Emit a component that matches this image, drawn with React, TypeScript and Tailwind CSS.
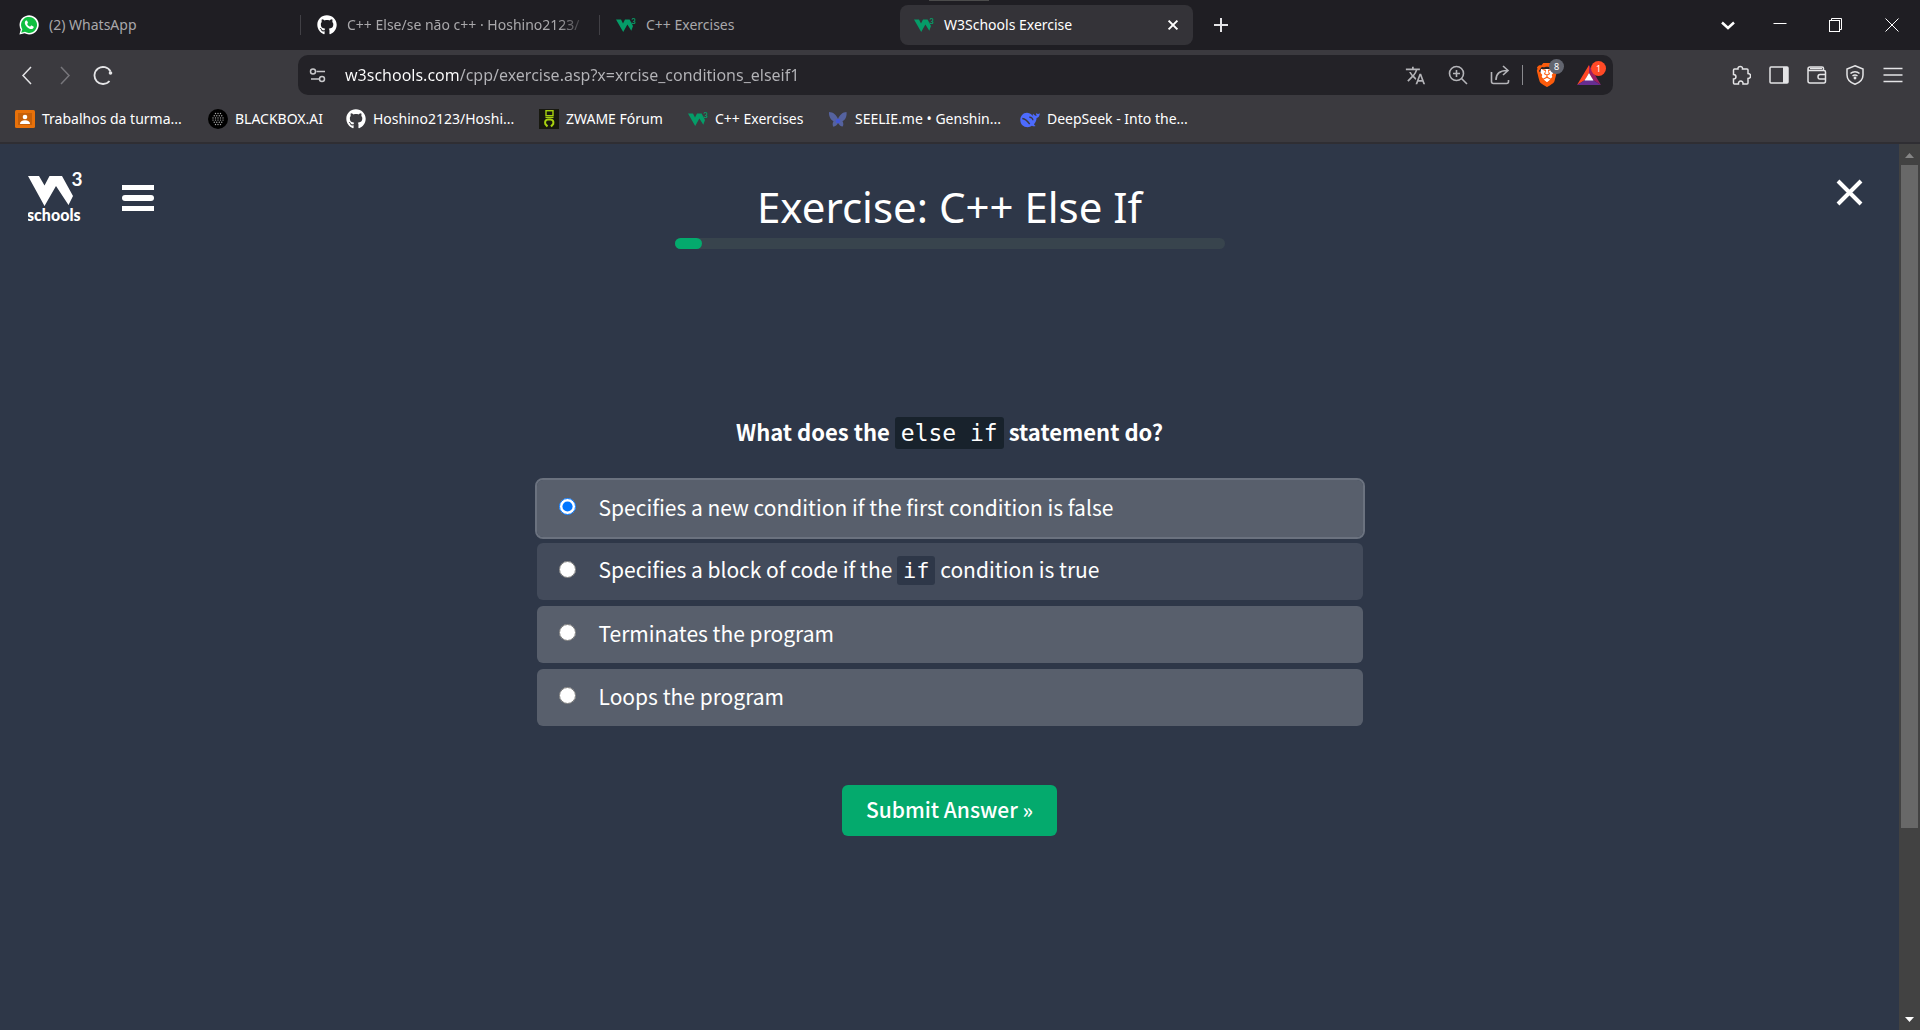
import React, { useState } from "react";
import { FaGithub } from "react-icons/fa";
import { SiBrave } from "react-icons/si";
import { MdTranslate } from "react-icons/md";

const UI = "font-['Noto_Sans',sans-serif]";

function W3Icon() {
  return (
    <svg viewBox="0 0 20 20" className="size-5 shrink-0" aria-hidden="true">
      <path d="M0 4.500h5l2 4 2-4h4.600l3.400 6.600-1.700 4.600-3.900-6.200-4.200 7.500z" fill="#059c68" />
      <text x="15.2" y="9" fontSize="8" fontWeight="700" fill="#059c68" fontFamily="Lato, sans-serif">3</text>
    </svg>
  );
}

function WhatsAppIcon() {
  return (
    <svg viewBox="0 0 20 20" className="size-5 shrink-0" aria-hidden="true">
      <path d="M0.4 19.6 1.8 14.6A9.6 9.6 0 1 1 5.6 18.3Z" fill="#fff" />
      <path d="M2.2 17.8 3.3 14.2A8 8 0 1 1 6 16.8Z" fill="#0fbf3f" />
      <path
        d="M6.9 5.6c.3-.3 1-.3 1.2.1l.8 1.7c.1.3 0 .6-.2.8l-.6.7c.7 1.4 1.6 2.2 3 2.8l.8-.9c.2-.2.5-.3.8-.2l1.6.8c.4.2.5.5.4.9-.2 1.200-1.300 1.900-2.400 1.800-3.100-.3-6.300-3.400-6.500-6.200 0-.9.4-1.700 1.100-2.300z"
        fill="#fff"
      />
    </svg>
  );
}

function ClassroomIcon() {
  return (
    <svg viewBox="0 0 20 20" className="size-5 shrink-0" aria-hidden="true">
      <rect x="0" y="1" width="20" height="18" rx="1.500" fill="#e8710a" />
      <rect x="3" y="4" width="14" height="12" fill="#c65f08" />
      <circle cx="10" cy="8" r="2.300" fill="#fff" />
      <path d="M5 15c0-2.600 2-3.700 5-3.700s5 1.100 5 3.700z" fill="#fff" />
    </svg>
  );
}

function BlackboxIcon() {
  const dots: [number, number][] = [];
  for (let r = 0; r < 6; r++) {
    const n = [3, 4, 5, 5, 4, 3][r];
    for (let c = 0; c < n; c++) dots.push([10 + (c - (n - 1) / 2) * 2.5, 4.5 + r * 2.2]);
  }
  return (
    <svg viewBox="0 0 20 20" className="size-5 shrink-0" aria-hidden="true">
      <circle cx="10" cy="10" r="10" fill="#000" />
      {dots.map(([x, y], i) => (
        <circle key={i} cx={x} cy={y} r="0.7" fill="#a9a9a9" />
      ))}
    </svg>
  );
}

function ZwameIcon() {
  return (
    <svg viewBox="0 0 20 20" className="size-5 shrink-0" aria-hidden="true">
      <rect width="20" height="20" fill="#17180f" />
      <g fill="none" stroke="#a8d20f">
        <rect x="7" y="1.700" width="7" height="5" strokeWidth="1.400" />
        <path d="M6.500 8.500h8" strokeWidth="1.200" />
        <path d="M8.500 17.500 6.300 15c-.8-3 .7-4.600 2.700-4.600h2.500c2 0 3.500 1.600 2.700 4.600L12 17.500" strokeWidth="2" />
      </g>
    </svg>
  );
}

function ButterflyIcon() {
  return (
    <svg viewBox="0 0 20 20" className="size-5 shrink-0" aria-hidden="true">
      <path
        d="M1 3c4 0 7.500 2.800 9 7 1.500-4.200 5-7 8.500-7 .5 4-.8 7.700-4 9.300 1 1.700 1.200 3.700.2 5.200-2-.2-3.700-1.500-4.700-3.500-1 2-2.500 3.400-4.700 3.700-1-1.700-.8-3.700.2-5.400C2.500 10.700.7 7 1 3z"
        fill="#55629f"
      />
      <circle cx="10" cy="12" r="2.300" fill="#4257d6" />
    </svg>
  );
}

function DeepSeekIcon() {
  return (
    <svg viewBox="0 0 20 20" className="size-5 shrink-0" aria-hidden="true">
      <path
        d="M19.800 4.200c-1.200.9-2.500 1-3.400-.2-.4.900-.3 2 .4 3-1.600-.2-2.800-1-3.700-2.200-.7.900-.3 1.900.4 2.700-1.600-1.400-3.500-3.600-6.300-3.700C3.200 3.600.3 7 .3 11c0 4.300 3.300 7.200 7.200 7.200 1.800 0 3.300-.6 4.500-1.400 1.100.6 2.600.7 3.600.2-.7-.5-1.300-1.100-1.600-1.800 1.600-1.700 2.500-3.700 2.600-6.100 2-.5 3.200-2.200 3.200-4.900z"
        fill="#4d6bfe"
      />
      <path
        d="M2.300 9.500c3.200.3 5.400 2.700 7.400 5.700M9.300 8.300c2-.3 3.500 1.200 3.600 3"
        fill="none"
        stroke="#3b3a3f"
        strokeWidth="1.400"
      />
    </svg>
  );
}

function BatIcon() {
  return (
    <svg viewBox="0 0 24 20" className="h-5 w-6" aria-hidden="true">
      <path d="M12 0 0 20l8-5 4-7z" fill="#ff4724" />
      <path d="M12 0 24 20l-8-5-4-7z" fill="#9e1f63" />
      <path d="M0 20h24l-8-5H8z" fill="#662d91" />
      <path d="m12 8 4.500 7.500h-9z" fill="#fff" />
    </svg>
  );
}

function Line({ d, className = "size-5", w = 1.5, children }: { d?: string; className?: string; w?: number; children?: React.ReactNode }) {
  return (
    <svg viewBox="0 0 20 20" className={className} fill="none" stroke="currentColor" strokeWidth={w} aria-hidden="true">
      {d && <path d={d} />}
      {children}
    </svg>
  );
}

function Tab({ icon, title, fade }: { icon: React.ReactNode; title: string; fade?: boolean }) {
  return (
    <button className="flex h-10 min-w-0 flex-1 items-center gap-2.5 pl-4 pr-3 text-left text-[#a9a8ab]">
      {icon}
      <span
        className={
          fade
            ? "min-w-0 flex-1 overflow-hidden whitespace-nowrap [mask-image:linear-gradient(to_right,black_88%,transparent)]"
            : "min-w-0 flex-1 overflow-hidden whitespace-nowrap"
        }
      >
        {title}
      </span>
    </button>
  );
}

function TabStrip() {
  return (
    <div className="relative flex h-[50px] items-center bg-[#1f1e23] text-sm">
      <div className="absolute left-[929px] top-0 h-px w-[60px] bg-[#4b4b4b]" />
      <div className="flex w-[1196px] items-center">
        <div className="flex w-[300px] items-center pl-[3px]">
          <Tab icon={<WhatsAppIcon />} title="(2) WhatsApp" />
        </div>
        <div className="h-5 w-px bg-[#414045]" />
        <div className="flex w-[298px] items-center">
          <Tab icon={<FaGithub className="size-5 shrink-0 text-white" />} title="C++ Else/se não c++ · Hoshino2123/" fade />
        </div>
        <div className="h-5 w-px bg-[#414045]" />
        <div className="flex w-[300px] items-center">
          <Tab icon={<W3Icon />} title="C++ Exercises" />
        </div>
        <div className="flex h-10 w-[293px] items-center gap-2.5 rounded-lg bg-[#343338] pl-3.5 pr-3 text-white">
          <W3Icon />
          <span className="flex-1 whitespace-nowrap">W3Schools Exercise</span>
          <button aria-label="Close tab" className="flex size-4 items-center justify-center">
            <Line className="size-4" w={2.5} d="M4.500 4.500l11 11M15.500 4.500l-11 11" />
          </button>
        </div>
      </div>
      <button aria-label="New tab" className="ml-[15px] flex size-5 items-center justify-center text-[#e4e4e6]">
        <Line d="M10 3v14M3 10h14" w={2} />
      </button>
      <div className="ml-auto flex items-center text-white">
        <button aria-label="Search tabs" className="mr-2 flex size-8 items-center justify-center">
          <Line d="M4 7.500l6 5.500 6-5.500" w={2.5} />
        </button>
        <button aria-label="Minimize" className="flex h-[50px] w-14 items-center justify-center">
          <Line d="M3.500 8.500h13" w={1} />
        </button>
        <button aria-label="Restore" className="flex h-[50px] w-14 items-center justify-center">
          <Line w={1}>
            <rect x="3.500" y="5.500" width="10" height="11" />
            <path d="M5.500 5.500v-2h10v11h-2" />
          </Line>
        </button>
        <button aria-label="Close window" className="flex h-[50px] w-14 items-center justify-center">
          <Line d="M3.500 3.500l13 13M16.500 3.500l-13 13" w={1} />
        </button>
      </div>
    </div>
  );
}

function Toolbar() {
  return (
    <div className="flex h-[50px] items-center bg-[#3b3a3f] text-[#e4e4e6]">
      <div className="flex w-[298px] items-center gap-[18px] pl-[17px]">
        <button aria-label="Back"><Line d="M14 2 6 10.500 14 19" w={1.5} /></button>
        <button aria-label="Forward" className="text-[#77767b]"><Line d="M6 2l8 8.500L6 19" w={1.5} /></button>
        <button aria-label="Reload">
          <Line w={1.8}>
            <path d="M17.500 6.500A8.500 8.500 0 1 0 16.500 16" />
            <circle cx="17.500" cy="8" r="1.800" fill="currentColor" stroke="none" />
          </Line>
        </button>
      </div>
      <div className="flex h-10 w-[1315px] min-w-0 items-center rounded-[10px] bg-[#232227] pl-2.5 pr-3">
        <button aria-label="Site information" className="text-[#c8c8ca]">
          <Line w={1.5}>
            <circle cx="5" cy="6.500" r="2.500" />
            <path d="M8.500 6.500H17M3 14h8" />
            <circle cx="14" cy="14" r="2.500" />
          </Line>
        </button>
        <input
          type="text"
          aria-label="Address"
          defaultValue="w3schools.com/cpp/exercise.asp?x=xrcise_conditions_elseif1"
          className="ml-[17px] h-8 min-w-0 flex-1 bg-[linear-gradient(to_right,#ffffff_115px,#b4b4b8_115px)] bg-clip-text text-base text-transparent outline-none"
        />
        <div className="flex items-center text-[#b4b4b8]">
          <button aria-label="Translate" className="mr-[22px]"><MdTranslate className="size-[21px]" /></button>
          <button aria-label="Zoom" className="mr-[22px]">
            <Line w={1.6}>
              <circle cx="8.500" cy="8.500" r="7" />
              <path d="M13.500 13.500 19 19M8.500 5v7M5 8.500h7" />
            </Line>
          </button>
          <button aria-label="Share" className="mr-3">
            <Line w={1.6} d="M1.500 7v9.500q0 2 2 2h13q2 0 2-2V15M6 15C6 9 9 5.500 17 5.500M13 1l5 4.500-5 4.500" />
          </button>
          <div className="mr-3.5 h-5 w-px bg-[#8a8a8e]" />
          <button aria-label="Brave Shields, 8 blocked" className="relative mr-5 h-6 w-5">
            <span className="flex h-6 w-5 items-center justify-center">
              <svg viewBox="0 0 20 24" className="absolute inset-0 h-6 w-5" aria-hidden="true"><path d="M4 6h12l1 6-3 6-4 3-4-3-3-6z" fill="#fff" /></svg>
              <SiBrave className="relative h-6 w-6 shrink-0 text-[#fb5b0c]" />
            </span>
            <span className="absolute -top-1 left-3 flex size-[15px] items-center justify-center rounded-full bg-[#62656f] text-[9px] leading-none text-white">8</span>
          </button>
          <button aria-label="Brave Rewards, 1 notification" className="relative h-5 w-6">
            <BatIcon />
            <span className="absolute -top-1 left-3.5 flex size-[15px] items-center justify-center rounded-full bg-[#ff4a26] text-[9px] leading-none text-white">1</span>
          </button>
        </div>
      </div>
      <div className="ml-auto flex items-center gap-[18px] pr-[17px]">
        <button aria-label="Extensions">
          <Line w={1.5} d="M3.500 4H7C6.500.5 12 .5 11.500 4H16q1 0 1 1v3.500c3.500.3 3.500 5 0 5V18q0 1-1 1h-4c.5-4-5-4-4.500 0H3.500q-1 0-1-1v-4c3.300 0 3.300-4.500 0-4.500V5q0-1 1-1z" />
        </button>
        <button aria-label="Sidebar">
          <Line w={1.5}>
            <rect x="1" y="2" width="18" height="16" rx="1" />
            <rect x="14" y="2" width="5" height="16" fill="currentColor" stroke="none" />
          </Line>
        </button>
        <button aria-label="Wallet">
          <Line w={1.5}>
            <path d="M1 4v12q0 2 2 2h14q1.500 0 1.500-2V7q0-1.500-1.500-1.500H2.500Q1 5.500 1 4q0-2 2-2h12q1.500 0 1.500 1.500v2M18.500 9.500H13q-2 0-2 2.300t2 2.200h5.500" />
            <path d="M3 3.500h12" />
          </Line>
        </button>
        <button aria-label="VPN">
          <Line w={1.5}>
            <path d="M10 .8 18 4v6c0 4.500-3 7.500-8 9.300C5 17.500 2 14.500 2 10V4z" />
            <path d="M5.500 8.500c2.500-2.300 6.500-2.300 9 0M7.500 11c1.500-1.200 3.500-1.200 5 0" />
            <circle cx="10" cy="13" r="0.700" fill="currentColor" />
          </Line>
        </button>
        <button aria-label="Menu"><Line w={1.5} d="M0.500 3.500h19M0.500 10h19M0.500 16.500h19" /></button>
      </div>
    </div>
  );
}

const bookmarks = [
  { icon: <ClassroomIcon />, label: "Trabalhos da turma...", width: "w-[193px]" },
  { icon: <BlackboxIcon />, label: "BLACKBOX.AI", width: "w-[138px]" },
  { icon: <FaGithub className="size-5 shrink-0 text-white" />, label: "Hoshino2123/Hoshi...", width: "w-[193px]" },
  { icon: <ZwameIcon />, label: "ZWAME Fórum", width: "w-[149px]" },
  { icon: <W3Icon />, label: "C++ Exercises", width: "w-[140px]" },
  { icon: <ButterflyIcon />, label: "SEELIE.me • Genshin...", width: "w-[192px]" },
  { icon: <DeepSeekIcon />, label: "DeepSeek - Into the...", width: "w-[192px]" },
];

function Bookmarks() {
  return (
    <nav aria-label="Bookmarks" className="flex h-11 items-center border-b-2 border-[#2f2e33] bg-[#3b3a3f] pb-1 pl-[15px] text-sm text-white">
      {bookmarks.map((b) => (
        <a key={b.label} href="#" className={`${b.width} flex items-center gap-[7px] whitespace-nowrap`}>
          {b.icon}
          {b.label}
        </a>
      ))}
    </nav>
  );
}

function ScrollBar() {
  return (
    <div className="flex w-[21px] shrink-0 flex-col items-center bg-[#424242]">
      <svg viewBox="0 0 21 21" className="size-[21px]" aria-hidden="true"><path d="M6 14h9l-4.500-5z" fill="#868686" /></svg>
      <div className="w-[17px] flex-[663] bg-[#686868]" />
      <div className="flex-[181]" />
      <svg viewBox="0 0 21 21" className="size-[21px]" aria-hidden="true"><path d="M6 8h9l-4.500 5z" fill="#fff" /></svg>
    </div>
  );
}

const code = "rounded-[3px] px-1.5 font-['DejaVu_Sans_Mono',monospace] font-normal";

const answers: { text: React.ReactNode; row: string }[] = [
  { text: "Specifies a new condition if the first condition is false", row: "bg-[#585f6c] outline-2 outline-[#6b727f]" },
  {
    text: (
      <>
        Specifies a block of code if the <code className={`${code} bg-[#2e3748] py-0.5 text-[22px]`}>if</code> condition is true
      </>
    ),
    row: "bg-[#434b5b]",
  },
  { text: "Terminates the program", row: "bg-[#585f6c]" },
  { text: "Loops the program", row: "bg-[#585f6c]" },
];

function Exercise() {
  const [picked, setPicked] = useState(0);
  return (
    <main className="min-w-0 flex-1 pb-16">
      <header className="grid grid-cols-[1fr_550px_1fr]">
        <div className="flex items-start pl-7">
          <a href="#" aria-label="W3Schools home" className="mt-6">
            <svg viewBox="0 0 55 56" className="h-14 w-[55px]" aria-hidden="true">
              <path d="M0 8h11l5.500 9.500L21.500 8H34l11 20-4.500 9L28 18 16.500 38z" fill="#fff" />
              <text x="43.500" y="18" fontSize="19" fontWeight="700" fill="#fff" fontFamily="Lato, sans-serif">3</text>
              <text x="-1" y="53" fontSize="16" fontWeight="900" fill="#fff" fontFamily="Lato, sans-serif">schools</text>
            </svg>
          </a>
          <button aria-label="Open menu" className="ml-[39px] mt-[41px] flex w-8 flex-col gap-[5px]">
            <span className="h-[5px] bg-white" />
            <span className="h-[6px] rounded-sm bg-white" />
            <span className="h-[5px] bg-white" />
          </button>
        </div>
        <div className="pt-[38px]">
          <h1 className="whitespace-nowrap text-center text-[42px] leading-[50px] text-white">Exercise: C++ Else If</h1>
          <div className="mt-1.5 h-[11px] rounded-full bg-[#38444d]">
            <div className="h-[11px] w-[5%] rounded-full bg-[#04aa6d]" />
          </div>
        </div>
        <div className="flex justify-end pr-9 pt-[35px]">
          <button aria-label="Close exercise" className="h-[27px] text-white">
            <svg viewBox="0 0 27 27" className="size-[27px]" fill="none" stroke="currentColor" strokeWidth="4" aria-hidden="true">
              <path d="M2 2l23 23M25 2 2 25" />
            </svg>
          </button>
        </div>
      </header>

      <form
        className="mx-auto mt-[165px] flex w-full max-w-[826px] flex-col items-center font-['Noto_Sans_CJK_SC',sans-serif] text-white"
        onSubmit={(e) => e.preventDefault()}
      >
        <h2 className="text-[22px] font-bold leading-[34px]">
          What does the <code className={`${code} bg-[#18222c] py-[3px] text-[23px]`}>else if</code> statement do?
        </h2>
        <fieldset aria-label="Answers" className="mt-[30px] flex w-full flex-col gap-1.5">
          {answers.map((a, i) => (
            <label key={i} className={`${a.row} flex h-[57px] items-center gap-[23px] rounded-md pb-1 pl-[22px] text-[21px] leading-8`}>
              <input
                type="radio"
                name="answer"
                checked={picked === i}
                onChange={() => setPicked(i)}
                className="size-[17px] shrink-0"
              />
              <span>{a.text}</span>
            </label>
          ))}
        </fieldset>
        <button type="submit" className="mt-[59px] h-[51px] rounded-md bg-[#04aa6d] px-6 pb-1 text-[21px] font-medium leading-8">
          Submit Answer »
        </button>
      </form>
    </main>
  );
}

export default function App() {
  return (
    <div className={`${UI} flex min-h-screen flex-col bg-[#2e3748]`}>
      <TabStrip />
      <Toolbar />
      <Bookmarks />
      <div className="flex flex-1">
        <Exercise />
        <ScrollBar />
      </div>
    </div>
  );
}
